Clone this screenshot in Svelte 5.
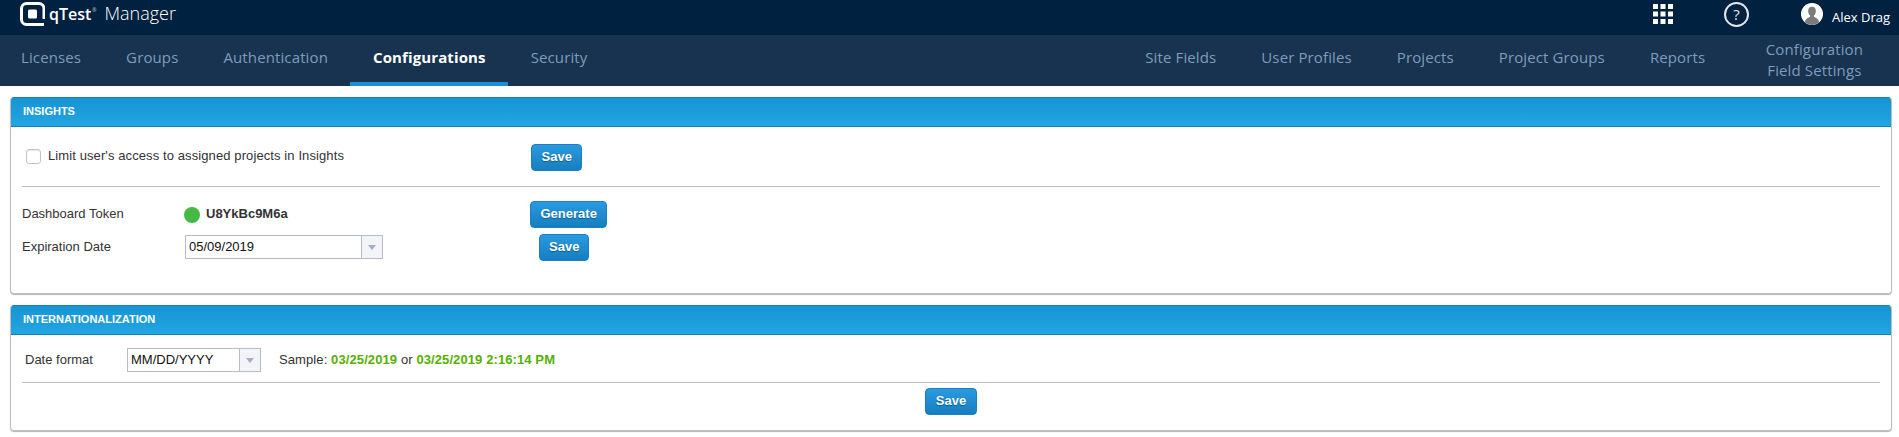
<script>
  const leftTabs = [
    { label: 'Licenses' },
    { label: 'Groups' },
    { label: 'Authentication' },
    { label: 'Configurations', active: true },
    { label: 'Security' },
  ];
  const rightTabs = ['Site Fields', 'User Profiles', 'Projects', 'Project Groups', 'Reports'];
</script>

<div class="topbar">
  <div class="brand">
    <svg class="logo" width="25" height="24" viewBox="0 0 25 24">
      <path d="M24 17V6.500A5 5 0 0 0 19 1.500H6.500A5 5 0 0 0 1.500 6.500V17.500A5 5 0 0 0 6.500 22.500H24" fill="none" stroke="#fff" stroke-width="3" />
      <rect x="8" y="7.500" width="9" height="9" rx="1.500" fill="#fff" />
    </svg>
    <span class="qtest">qTest<span class="reg">®</span></span>
    <span class="product">Manager</span>
  </div>
  <div class="top-right">
    <svg class="apps" width="20" height="20" viewBox="0 0 20 20" fill="#fff">
      {#each [0, 7.500, 15] as y}
        {#each [0, 7.500, 15] as x}
          <rect {x} {y} width="5" height="5" />
        {/each}
      {/each}
    </svg>
    <span class="help">?</span>
    <svg class="avatar" width="22" height="22" viewBox="0 0 23 23">
      <circle cx="11.500" cy="11.500" r="11.500" fill="#fff" />
      <path d="M4 20c1-4 4-4.500 5.500-5.500v-1.500c-1.500-1-2-3-2-5 0-2.500 1.500-4 4-4s4 1.500 4 4c0 2-.5 4-2 5v1.500c1.500 1 4.500 1.500 5.500 5.500a11 11 0 0 1 -15 0z" fill="#7b7b7b" />
    </svg>
    <span class="user">Alex Drag</span>
  </div>
</div>

<nav class="tabs">
  <div class="tab-group left">
    {#each leftTabs as tab}
      <span class="tab" class:active={tab.active}>{tab.label}</span>
    {/each}
  </div>
  <div class="tab-group right">
    {#each rightTabs as tab}
      <span class="tab">{tab}</span>
    {/each}
    <span class="tab double">Configuration<br />Field Settings</span>
  </div>
</nav>

<main class="page">
  <section class="panel insights">
    <header>INSIGHTS</header>
    <div class="body">
      <div class="row limit">
        <span class="checkbox"></span>
        <span class="limit-label">Limit user's access to assigned projects in Insights</span>
        <button>Save</button>
      </div>
      <hr />
      <div class="row token">
        <span class="token-label">Dashboard Token</span>
        <span class="dot"></span>
        <strong class="token-value">U8YkBc9M6a</strong>
        <button>Generate</button>
      </div>
      <div class="row expiry">
        <span class="field-label">Expiration Date</span>
        <span class="combo date"><span class="value">05/09/2019</span><span class="arrow"></span></span>
        <button class="save-b">Save</button>
      </div>
    </div>
  </section>

  <section class="panel intl">
    <header>INTERNATIONALIZATION</header>
    <div class="body">
      <div class="row format">
        <span class="format-label">Date format</span>
        <span class="combo small"><span class="value">MM/DD/YYYY</span><span class="arrow"></span></span>
        <span class="sample">Sample: <b>03/25/2019</b> or <b>03/25/2019 2:16:14 PM</b></span>
      </div>
      <hr />
      <div class="actions"><button>Save</button></div>
    </div>
  </section>
</main>

<style>
  :global(body) {
    margin: 0;
    background: #fff;
    font-family: 'Liberation Sans', Arial, sans-serif;
    font-size: 13px;
    color: #333;
  }

  .topbar {
    height: 35px;
    background: #00213f;
    display: flex;
    align-items: flex-start;
    justify-content: space-between;
    padding: 0 9px 0 20px;
    color: #fff;
  }

  .brand {
    display: flex;
    align-items: center;
    height: 28px;
  }

  .qtest {
    font-family: 'Open Sans', sans-serif;
    font-weight: 600;
    font-size: 16px;
    margin-left: 4px;
    display: flex;
  }

  .reg {
    font-size: 5px;
    line-height: 14px;
    margin-left: 1px;
    opacity: 0.7;
  }

  .product {
    font-family: 'Open Sans', sans-serif;
    font-weight: 300;
    font-size: 18px;
    margin: -2px 0 0 8px;
  }

  .top-right {
    display: flex;
    align-items: center;
    height: 28px;
  }

  .help {
    width: 25px;
    height: 25px;
    box-sizing: border-box;
    border: 2px solid #e4e8ec;
    border-radius: 50%;
    margin-left: 51px;
    display: flex;
    align-items: center;
    justify-content: center;
    font-family: 'Open Sans', sans-serif;
    font-size: 15px;
    color: #e4e8ec;
  }

  .avatar {
    margin-left: 52px;
  }

  .user {
    font-family: 'Open Sans', sans-serif;
    font-size: 13px;
    margin: 6px 0 0 9px;
  }

  .tabs {
    height: 51px;
    background: #17334f;
    display: flex;
    justify-content: space-between;
    font-family: 'Open Sans', sans-serif;
    font-size: 15px;
    letter-spacing: 0.12px;
    color: #7f9cbc;
  }

  .tab-group {
    display: flex;
  }

  .tab-group.left {
    margin-left: -1.500px;
  }

  .tab {
    box-sizing: border-box;
    height: 51px;
    padding: 0 22.500px 4px;
    display: flex;
    align-items: center;
    text-align: center;
    border-bottom: 4px solid transparent;
  }

  .tab.active {
    color: #fff;
    font-weight: 700;
    border-bottom-color: #1a8fd6;
  }

  .tab.double {
    padding: 0 0 2px;
    margin: 0 36px 0 38px;
    line-height: 21px;
    border-bottom: 0;
  }

  .page {
    padding: 11px 7px 0 10px;
  }

  .panel {
    border: 1px solid #bdbdbd;
    border-top: 0;
    border-radius: 4px;
    box-shadow: 0 1px 1px #b5b5b5;
    margin-bottom: 11px;
    overflow: hidden;
  }

  .panel header {
    height: 30px;
    box-sizing: border-box;
    padding: 0 10px 2px 12px;
    display: flex;
    align-items: center;
    color: #fff;
    font-size: 11px;
    font-weight: 700;
    background: linear-gradient(#1694d4, #22a6e2);
    border-top: 1px solid #127fbf;
    border-bottom: 1px solid #127fbf;
  }

  .insights .body {
    height: 166px;
  }

  .intl .body {
    height: 95px;
  }

  hr {
    border: 0;
    border-top: 1px solid #bdbdbd;
    margin: 0 11px;
  }

  .row {
    display: flex;
    align-items: center;
    font-size: 13px;
  }

  .limit {
    height: 59px;
    padding-left: 15px;
  }

  .limit button {
    margin-top: 2px;
  }

  .checkbox {
    width: 13px;
    height: 13px;
    margin-top: -1px;
    border: 1px solid #c4c4c4;
    border-radius: 3px;
    box-shadow: inset 0 1px 1px #e5e5e5;
  }

  .limit-label {
    margin: -2px 0 0 7px;
    width: 483px;
    letter-spacing: 0.1px;
  }

  button {
    font-family: 'Liberation Sans', Arial, sans-serif;
    font-size: 13px;
    font-weight: 700;
    color: #fff;
    height: 27px;
    padding: 0 9.500px 2px;
    border: 1px solid #1a80c4;
    border-radius: 4px;
    background: linear-gradient(#2a9ade, #167ec0);
    text-shadow: 0 1px 1px #0b5c90;
  }

  .token {
    margin-top: 14px;
    height: 27px;
    padding-left: 11px;
  }

  .token-label {
    width: 162px;
    margin-top: -3px;
  }

  .field-label {
    width: 163px;
    margin-top: -2px;
  }

  .dot {
    width: 16px;
    height: 16px;
    border-radius: 50%;
    background: #44b945;
  }

  .token-value {
    margin: -3px 0 0 6px;
    width: 324px;
  }

  .expiry {
    height: 28px;
    margin-top: 5px;
    padding-left: 11px;
  }

  .combo {
    box-sizing: border-box;
    height: 24px;
    border: 1px solid #b5bccd;
    display: inline-flex;
    color: #111;
  }

  .combo .value {
    flex: 1;
    padding-left: 3px;
    line-height: 22px;
  }

  .arrow {
    width: 20px;
    border-left: 1px solid #b5bccd;
    background: #f3f4f7;
    position: relative;
  }

  .arrow::after {
    content: '';
    position: absolute;
    left: 6px;
    top: 9px;
    border: 4px solid transparent;
    border-top: 5px solid #a3adc4;
    border-bottom: 0;
  }

  .date {
    width: 198px;
  }

  .save-b {
    margin-left: 156px;
    height: 27px;
    padding: 0 9px 2px;
  }

  .format {
    height: 47px;
    padding: 2px 0 0 14px;
    box-sizing: border-box;
  }

  .format-label {
    width: 102px;
  }

  .small {
    width: 134px;
  }

  .sample {
    margin-left: 18px;
    letter-spacing: 0.1px;
  }

  .sample b {
    color: #56b000;
  }

  .actions {
    display: flex;
    justify-content: center;
    padding-top: 5px;
  }
</style>
